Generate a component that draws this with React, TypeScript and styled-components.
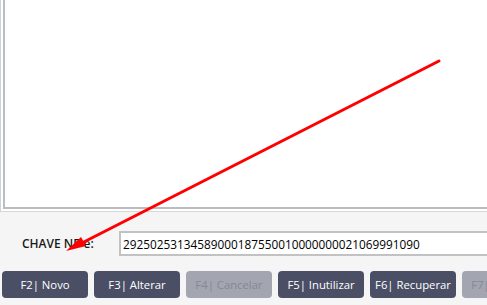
import styled, { createGlobalStyle } from "styled-components";

const GlobalStyle = createGlobalStyle`
  html, body {
    margin: 0;
    padding: 0;
    background: #f5f5f5;
    overflow: hidden;
  }
  body {
    font-family: "Open Sans", "Noto Sans", sans-serif;
  }
`;

const Screen = styled.div`
  position: relative;
  width: 487px;
  height: 305px;
  overflow: hidden;
  background: #f5f5f5;
`;

const Frame = styled.div`
  background: #ffffff;
  border-left: 1px solid #d2d2d2;
  border-bottom: 1px solid #d8d8d8;
  padding: 0 0 2px 2px;
`;

const Memo = styled.div`
  height: 207px;
  background: #ffffff;
  border-left: 2px solid #b7bec8;
  border-bottom: 2px solid #b9bcc0;
`;

const KeyRow = styled.div`
  display: flex;
  align-items: center;
  padding: 19px 0 0 22px;
`;

const Label = styled.label`
  width: 97px;
  flex: none;
  font-size: 12px;
  font-weight: 600;
  color: #1a1a1a;
`;

const KeyInput = styled.input`
  flex: none;
  width: 420px;
  height: 25px;
  box-sizing: border-box;
  border: 2px solid #c2c2c2;
  background: #ffffff;
  padding: 0 2px;
  font-family: "Open Sans", "Noto Sans", sans-serif;
  font-size: 11.8px;
  color: #000000;
  outline: none;
`;

const Toolbar = styled.div`
  display: flex;
  gap: 6px;
  padding: 15px 0 0 2px;
`;

const ActionButton = styled.button<{ $disabled?: boolean }>`
  flex: none;
  width: 86px;
  height: 27px;
  border: none;
  border-radius: 4px;
  background: ${({ $disabled }) => ($disabled ? "#a3a5b1" : "#4a4f66")};
  color: ${({ $disabled }) => ($disabled ? "#868894" : "#ffffff")};
  font-family: "Open Sans", "Noto Sans", sans-serif;
  font-size: 11.3px;
  padding: 0;
  white-space: nowrap;
  overflow: hidden;
  cursor: ${({ $disabled }) => ($disabled ? "not-allowed" : "pointer")};
`;

const Annotation = styled.svg`
  position: absolute;
  left: 0;
  top: 0;
  pointer-events: none;
`;

const buttons = [
  { label: "F2| Novo" },
  { label: "F3| Alterar" },
  { label: "F4| Cancelar", disabled: true },
  { label: "F5| Inutilizar" },
  { label: "F6| Recuperar" },
  { label: "F7| Imprimir", disabled: true },
];

export default function App() {
  return (
    <Screen>
      <GlobalStyle />
      <Frame>
        <Memo />
      </Frame>

      <KeyRow>
        <Label htmlFor="chave">CHAVE NF-e:</Label>
        <KeyInput id="chave" readOnly value="29250253134589000187550010000000021069991090" />
      </KeyRow>

      <Toolbar>
        {buttons.map((b) => (
          <ActionButton key={b.label} $disabled={b.disabled} type="button">
            {b.label}
          </ActionButton>
        ))}
      </Toolbar>

      <Annotation width="487" height="305" viewBox="0 0 487 305">
        <line x1="439" y1="61" x2="76" y2="246" stroke="#ff0000" strokeWidth="3" strokeLinecap="round" />
        <polygon points="66,251 81,237 86,246" fill="#ff0000" />
      </Annotation>
    </Screen>
  );
}
